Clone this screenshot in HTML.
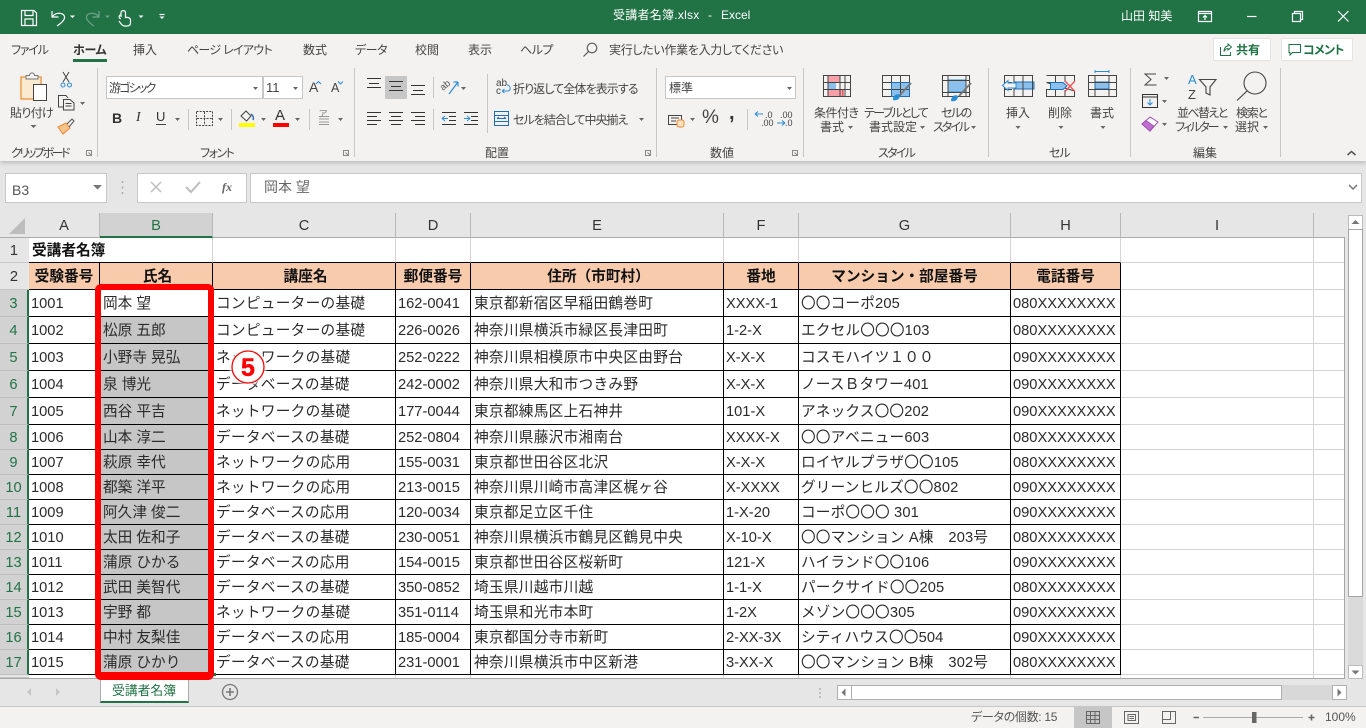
<!DOCTYPE html>
<html lang="ja"><head><meta charset="utf-8"><title>受講者名簿.xlsx - Excel</title>
<style>
*{box-sizing:border-box}
html,body{margin:0;padding:0}
body{width:1366px;height:728px;overflow:hidden;position:relative;background:#e6e6e6;font-family:"Liberation Sans","Noto Sans CJK JP",sans-serif;color:#444}
.a{position:absolute}
.t{position:absolute;white-space:nowrap;line-height:16px;font-size:12px;font-feature-settings:"palt";color:#444}
.w{color:#fff}
#tb{left:0;top:0;width:1366px;height:34px;background:#217346}
#rb{left:0;top:34px;width:1366px;height:127px;background:#f3f2f1;box-shadow:0 2px 4px rgba(0,0,0,.18)}
.sep{position:absolute;width:1px;background:#c6c6c6}
.box{position:absolute;background:#fff;border:1px solid #c6c6c6}
.btn{position:absolute;background:#fff;border:1px solid #e4e4e4;border-radius:2px}
.ch{position:absolute;top:213px;height:25px;background:#e6e6e6;border-bottom:1px solid #ababab;border-right:1px solid #b8b8b8;text-align:center;font-size:14.67px;line-height:26px;color:#333}
#grid{left:29px;top:238px;width:1315px;height:440px;overflow:hidden;background:#fff}
table{border-collapse:separate;border-spacing:0;table-layout:fixed}
#sh{width:1316px;font-size:14.67px;color:#2b2b2b}
#sh td{padding:2px 0 0 2px;border-right:1px solid #d4d4d4;border-bottom:1px solid #d4d4d4;white-space:nowrap;line-height:20px;overflow:visible;vertical-align:middle}
#sh tr.k td{border-color:#000}
#sh tr.k td.g{border-color:#d4d4d4}
#sh tr.k td:nth-child(2),#sh tr.k td:nth-child(3),#sh tr.k td:nth-child(5){padding-left:3px}
#sh tr.d td:nth-child(3),#sh tr.d td:nth-child(5){letter-spacing:.28px}
#sh tr.d td:nth-child(7){letter-spacing:.15px}
#sh tr.o td{background:#f8cbad;text-align:center;font-weight:700;color:#111;padding-left:0}
#sh tr.o td.g{background:#fff}
#sh tr.d td:nth-child(2){background:#c6c6c6}
#sh tr.d.w1 td:nth-child(2){background:#fff}
.h27 td{height:27px}.h25 td{height:25px}
#sh td.bk{border-bottom-color:#000}
#sh td.nr{border-right:0;font-weight:700;color:#111;padding-left:3px}
.rn{position:absolute;left:0;width:29px;background:#e6e6e6;border-bottom:1px solid #c6c6c6;text-align:center;font-size:14.67px;color:#333;padding-right:1px}
.rn.s{background:#d2d2d2;color:#217346;border-right:2px solid #217346;border-bottom-color:#bdbdbd;padding-right:0}
</style></head><body>

<div class="a" id="tb"></div>
<div class="a" id="rb"></div>

<!-- title bar text -->
<div class="t w" style="left:613px;top:7px;letter-spacing:.25px">受講者名簿.xlsx</div>
<div class="t w" style="left:708px;top:7px">-</div>
<div class="t w" style="left:721px;top:7px">Excel</div>
<div class="t w" style="left:1121px;top:8px;font-size:12px">山田 知美</div>

<!-- tabs -->
<div class="t" style="left:11px;top:42px;letter-spacing:-1.2px">ファイル</div>
<div class="t" style="left:73px;top:42px;font-weight:700;color:#333;letter-spacing:-.3px">ホーム</div>
<div class="t" style="left:133px;top:42px">挿入</div>
<div class="t" style="left:187px;top:42px;letter-spacing:-.7px">ページ レイアウト</div>
<div class="t" style="left:303px;top:42px">数式</div>
<div class="t" style="left:355px;top:42px;letter-spacing:-.5px">データ</div>
<div class="t" style="left:415px;top:42px">校閲</div>
<div class="t" style="left:468px;top:42px">表示</div>
<div class="t" style="left:520px;top:42px;letter-spacing:-.5px">ヘルプ</div>
<div class="t" style="left:609px;top:42px;letter-spacing:-.3px">実行したい作業を入力してください</div>
<div class="a" style="left:73px;top:59px;width:34px;height:3px;background:#217346"></div>

<div class="btn" style="left:1213px;top:38px;width:58px;height:23px"></div>
<div class="btn" style="left:1281px;top:38px;width:72px;height:23px"></div>
<div class="t" style="left:1236px;top:42px;font-weight:700;color:#217346">共有</div>
<div class="t" style="left:1303px;top:42px;font-weight:700;color:#217346;letter-spacing:-.7px">コメント</div>

<!-- ribbon separators -->
<div class="sep" style="left:97px;top:68px;height:89px"></div>
<div class="sep" style="left:354px;top:68px;height:89px"></div>
<div class="sep" style="left:656px;top:68px;height:89px"></div>
<div class="sep" style="left:803px;top:68px;height:89px"></div>
<div class="sep" style="left:988px;top:68px;height:89px"></div>
<div class="sep" style="left:1130px;top:68px;height:89px"></div>
<div class="sep" style="left:1280px;top:68px;height:89px"></div>
<div class="sep" style="left:188px;top:109px;height:21px"></div>
<div class="sep" style="left:231px;top:109px;height:21px"></div>
<div class="sep" style="left:309px;top:109px;height:21px"></div>
<div class="sep" style="left:433px;top:77px;height:21px"></div>
<div class="sep" style="left:433px;top:109px;height:21px"></div>
<div class="sep" style="left:487px;top:74px;height:59px"></div>
<div class="sep" style="left:747px;top:109px;height:21px"></div>

<!-- group labels -->
<div class="t" style="left:11px;top:145px;letter-spacing:-2.4px">クリップボード</div>
<div class="t" style="left:200px;top:145px;letter-spacing:-1.5px">フォント</div>
<div class="t" style="left:485px;top:145px">配置</div>
<div class="t" style="left:710px;top:145px">数値</div>
<div class="t" style="left:878px;top:145px;letter-spacing:-1.7px">スタイル</div>
<div class="t" style="left:1049px;top:145px;letter-spacing:-1px">セル</div>
<div class="t" style="left:1193px;top:145px">編集</div>

<!-- clipboard -->
<div class="t" style="left:10px;top:105px;letter-spacing:-.7px">貼り付け</div>

<!-- font -->
<div class="box" style="left:106px;top:76px;width:157px;height:23px"></div>
<div class="box" style="left:263px;top:76px;width:40px;height:23px"></div>
<div class="t" style="left:109px;top:80px;letter-spacing:-1.8px">游ゴシック</div>
<div class="t" style="left:266px;top:80px;font-size:13px">11</div>
<div class="t" style="left:309px;top:79px;font-size:14px">A</div>
<div class="t" style="left:331px;top:80px;font-size:12.5px">A</div>
<div class="t" style="left:112px;top:110px;font-size:14px;font-weight:700;color:#333">B</div>
<div class="t" style="left:136px;top:110px;font-size:14px;font-style:italic;font-family:'Liberation Serif',serif;color:#333">I</div>
<div class="t" style="left:156px;top:109px;font-size:13px;color:#333">U</div>
<div class="t" style="left:275px;top:108px;font-size:15px;color:#333">A</div>
<div class="t" style="left:319px;top:106px;font-size:9px;color:#777">ア</div>

<!-- align / wrap -->
<div class="a" style="left:385px;top:76px;width:22px;height:23px;background:#c6c6c6"></div>
<div class="t" style="left:513px;top:81px;letter-spacing:-.9px">折り返して全体を表示する</div>
<div class="t" style="left:513px;top:112px;letter-spacing:-1px">セルを結合して中央揃え</div>

<!-- number -->
<div class="box" style="left:665px;top:76px;width:131px;height:23px"></div>
<div class="t" style="left:669px;top:80px">標準</div>
<div class="t" style="left:702px;top:110px;font-size:19px;color:#444">%</div>
<div class="t" style="left:729px;top:105px;font-size:20px;font-weight:700;color:#333">,</div>
<div class="t" style="left:765px;top:107px;font-size:9px;color:#444">.0</div>
<div class="t" style="left:761px;top:115px;font-size:9px;color:#444">.00</div>
<div class="t" style="left:780px;top:107px;font-size:9px;color:#444">.00</div>
<div class="t" style="left:785px;top:115px;font-size:9px;color:#444">.0</div>

<!-- styles -->
<div class="t" style="left:814px;top:105px;letter-spacing:-.5px">条件付き</div>
<div class="t" style="left:820px;top:119px">書式</div>
<div class="t" style="left:864px;top:105px;letter-spacing:-1.7px">テーブルとして</div>
<div class="t" style="left:869px;top:119px">書式設定</div>
<div class="t" style="left:941px;top:105px;letter-spacing:-1.5px">セルの</div>
<div class="t" style="left:933px;top:119px;letter-spacing:-2px">スタイル</div>

<!-- cells -->
<div class="t" style="left:1006px;top:105px">挿入</div>
<div class="t" style="left:1048px;top:105px">削除</div>
<div class="t" style="left:1090px;top:105px">書式</div>

<!-- edit -->
<div class="t" style="left:1177px;top:105px;letter-spacing:-1.6px">並べ替えと</div>
<div class="t" style="left:1175px;top:119px;letter-spacing:-2px">フィルター</div>
<div class="t" style="left:1236px;top:105px;letter-spacing:-1.3px">検索と</div>
<div class="t" style="left:1235px;top:119px">選択</div>
<div class="t" style="left:1188px;top:72px;font-size:13px;color:#2a8dd4">A</div>
<div class="t" style="left:1188px;top:87px;font-size:13px;color:#444">Z</div>

<!-- formula bar -->
<div class="box" style="left:5px;top:173px;width:102px;height:30px"></div>
<div class="t" style="left:12px;top:182px;font-size:14px;color:#555">B3</div>
<div class="box" style="left:137px;top:173px;width:110px;height:30px"></div>
<div class="t" style="left:222px;top:179px;font-size:12px;font-style:italic;font-weight:700;font-family:'Liberation Serif',serif;color:#666">fx</div>
<div class="box" style="left:250px;top:173px;width:1112px;height:30px"></div>
<div class="t" style="left:264px;top:179px;font-size:14px;color:#666">岡本 望</div>

<!-- column headers -->
<div class="a" style="left:0;top:213px;width:1345px;height:25px;background:#e6e6e6;border-bottom:1px solid #ababab"></div>
<div class="ch" style="left:29px;width:71px">A</div>
<div class="ch" style="left:100px;width:113px;background:#d2d2d2;border-bottom:2px solid #217346;color:#217346">B</div>
<div class="ch" style="left:213px;width:183px">C</div>
<div class="ch" style="left:396px;width:75px">D</div>
<div class="ch" style="left:471px;width:253px">E</div>
<div class="ch" style="left:724px;width:75px">F</div>
<div class="ch" style="left:799px;width:212px">G</div>
<div class="ch" style="left:1011px;width:110px">H</div>
<div class="ch" style="left:1121px;width:193px">I</div>

<!-- row headers -->
<div class="rn" style="top:238px;height:25px;line-height:26px">1</div>
<div class="rn" style="top:263px;height:27px;line-height:28px">2</div>
<div class="rn s" style="top:290px;height:27px;line-height:28px">3</div>
<div class="rn s" style="top:317px;height:27px;line-height:28px">4</div>
<div class="rn s" style="top:344px;height:27px;line-height:28px">5</div>
<div class="rn s" style="top:371px;height:27px;line-height:28px">6</div>
<div class="rn s" style="top:398px;height:27px;line-height:28px">7</div>
<div class="rn s" style="top:425px;height:25px;line-height:26px">8</div>
<div class="rn s" style="top:450px;height:25px;line-height:26px">9</div>
<div class="rn s" style="top:475px;height:25px;line-height:26px">10</div>
<div class="rn s" style="top:500px;height:25px;line-height:26px">11</div>
<div class="rn s" style="top:525px;height:25px;line-height:26px">12</div>
<div class="rn s" style="top:550px;height:25px;line-height:26px">13</div>
<div class="rn s" style="top:575px;height:25px;line-height:26px">14</div>
<div class="rn s" style="top:600px;height:25px;line-height:26px">15</div>
<div class="rn s" style="top:625px;height:25px;line-height:26px">16</div>
<div class="rn s" style="top:650px;height:25px;line-height:26px">17</div>
<div class="rn" style="top:675px;height:3px"></div>

<!-- grid -->
<div class="a" id="grid">
<table id="sh">
<colgroup><col style="width:71px"><col style="width:113px"><col style="width:183px"><col style="width:75px"><col style="width:253px"><col style="width:75px"><col style="width:212px"><col style="width:110px"><col style="width:193px"><col style="width:31px"></colgroup>
<tbody>
<tr class="h25"><td class="nr bk">受講者名簿</td><td class="bk"></td><td class="bk"></td><td class="bk"></td><td class="bk"></td><td class="bk"></td><td class="bk"></td><td class="bk"></td><td></td><td></td></tr>
<tr class="h27 k o"><td>受験番号</td><td>氏名</td><td>講座名</td><td>郵便番号</td><td>住所（市町村）</td><td>番地</td><td>マンション・部屋番号</td><td>電話番号</td><td class="g"></td><td class="g"></td></tr>
<tr class="h27 k d w1"><td>1001</td><td>岡本 望</td><td>コンピューターの基礎</td><td>162-0041</td><td>東京都新宿区早稲田鶴巻町</td><td>XXXX-1</td><td>〇〇コーポ205</td><td>080XXXXXXXX</td><td class="g"></td><td class="g"></td></tr>
<tr class="h27 k d"><td>1002</td><td>松原 五郎</td><td>コンピューターの基礎</td><td>226-0026</td><td>神奈川県横浜市緑区長津田町</td><td>1-2-X</td><td>エクセル〇〇〇103</td><td>080XXXXXXXX</td><td class="g"></td><td class="g"></td></tr>
<tr class="h27 k d"><td>1003</td><td>小野寺 晃弘</td><td>ネットワークの基礎</td><td>252-0222</td><td>神奈川県相模原市中央区由野台</td><td>X-X-X</td><td>コスモハイツ１００</td><td>090XXXXXXXX</td><td class="g"></td><td class="g"></td></tr>
<tr class="h27 k d"><td>1004</td><td>泉 博光</td><td>データベースの基礎</td><td>242-0002</td><td>神奈川県大和市つきみ野</td><td>X-X-X</td><td>ノースＢタワー401</td><td>090XXXXXXXX</td><td class="g"></td><td class="g"></td></tr>
<tr class="h27 k d"><td>1005</td><td>西谷 平吉</td><td>ネットワークの基礎</td><td>177-0044</td><td>東京都練馬区上石神井</td><td>101-X</td><td>アネックス〇〇202</td><td>090XXXXXXXX</td><td class="g"></td><td class="g"></td></tr>
<tr class="h25 k d"><td>1006</td><td>山本 淳二</td><td>データベースの基礎</td><td>252-0804</td><td>神奈川県藤沢市湘南台</td><td>XXXX-X</td><td>〇〇アベニュー603</td><td>080XXXXXXXX</td><td class="g"></td><td class="g"></td></tr>
<tr class="h25 k d"><td>1007</td><td>萩原 幸代</td><td>ネットワークの応用</td><td>155-0031</td><td>東京都世田谷区北沢</td><td>X-X-X</td><td>ロイヤルプラザ〇〇105</td><td>080XXXXXXXX</td><td class="g"></td><td class="g"></td></tr>
<tr class="h25 k d"><td>1008</td><td>都築 洋平</td><td>ネットワークの応用</td><td>213-0015</td><td>神奈川県川崎市高津区梶ヶ谷</td><td>X-XXXX</td><td>グリーンヒルズ〇〇802</td><td>090XXXXXXXX</td><td class="g"></td><td class="g"></td></tr>
<tr class="h25 k d"><td>1009</td><td>阿久津 俊二</td><td>データベースの応用</td><td>120-0034</td><td>東京都足立区千住</td><td>1-X-20</td><td>コーポ〇〇〇 301</td><td>090XXXXXXXX</td><td class="g"></td><td class="g"></td></tr>
<tr class="h25 k d"><td>1010</td><td>太田 佐和子</td><td>データベースの基礎</td><td>230-0051</td><td>神奈川県横浜市鶴見区鶴見中央</td><td>X-10-X</td><td>〇〇マンション A棟　203号</td><td>080XXXXXXXX</td><td class="g"></td><td class="g"></td></tr>
<tr class="h25 k d"><td>1011</td><td>蒲原 ひかる</td><td>データベースの応用</td><td>154-0015</td><td>東京都世田谷区桜新町</td><td>121-X</td><td>ハイランド〇〇106</td><td>090XXXXXXXX</td><td class="g"></td><td class="g"></td></tr>
<tr class="h25 k d"><td>1012</td><td>武田 美智代</td><td>データベースの基礎</td><td>350-0852</td><td>埼玉県川越市川越</td><td>1-1-X</td><td>パークサイド〇〇205</td><td>080XXXXXXXX</td><td class="g"></td><td class="g"></td></tr>
<tr class="h25 k d"><td>1013</td><td>宇野 都</td><td>ネットワークの基礎</td><td>351-0114</td><td>埼玉県和光市本町</td><td>1-2X</td><td>メゾン〇〇〇305</td><td>090XXXXXXXX</td><td class="g"></td><td class="g"></td></tr>
<tr class="h25 k d"><td>1014</td><td>中村 友梨佳</td><td>データベースの応用</td><td>185-0004</td><td>東京都国分寺市新町</td><td>2-XX-3X</td><td>シティハウス〇〇504</td><td>090XXXXXXXX</td><td class="g"></td><td class="g"></td></tr>
<tr class="h25 k d"><td>1015</td><td>蒲原 ひかり</td><td>データベースの基礎</td><td>231-0001</td><td>神奈川県横浜市中区新港</td><td>3-XX-X</td><td>〇〇マンション B棟　302号</td><td>080XXXXXXXX</td><td class="g"></td><td class="g"></td></tr>
<tr class="h25"><td></td><td></td><td></td><td></td><td></td><td></td><td></td><td></td><td></td><td></td></tr>
</tbody></table>
</div>
<div class="a" style="left:1344px;top:237px;width:1px;height:442px;background:#a6a6a6"></div>
<div class="a" style="left:0;top:678px;width:1345px;height:1px;background:#a6a6a6"></div>

<!-- vertical scrollbar -->
<div class="a" style="left:1348px;top:229px;width:15px;height:436px;background:#dadada"></div>
<div class="a" style="left:1348px;top:215px;width:15px;height:15px;background:#fff;border:1px solid #bbb"></div>
<div class="a" style="left:1348px;top:229px;width:15px;height:368px;background:#fff;border:1px solid #a6a6a6"></div>
<div class="a" style="left:1348px;top:665px;width:15px;height:14px;background:#fff;border:1px solid #bbb"></div>

<!-- sheet tabs -->
<div class="a" style="left:100px;top:678px;width:89px;height:25px;background:#fff;border-left:1px solid #ababab;border-right:1px solid #ababab;border-bottom:2px solid #217346"></div>
<div class="t" style="left:112px;top:683px;font-size:12.8px;color:#217346;font-feature-settings:normal">受講者名簿</div>

<!-- horizontal scrollbar -->
<div class="a" style="left:851px;top:685px;width:481px;height:15px;background:#d8d8d8"></div>
<div class="a" style="left:837px;top:685px;width:15px;height:15px;background:#fff;border:1px solid #b0b0b0"></div>
<div class="a" style="left:851px;top:685px;width:431px;height:15px;background:#fff;border:1px solid #b0b0b0"></div>
<div class="a" style="left:1332px;top:685px;width:15px;height:15px;background:#fff;border:1px solid #b0b0b0"></div>

<!-- status bar -->
<div class="a" style="left:0;top:706px;width:1366px;height:22px;background:#f3f2f1;border-top:1px solid #c6c6c6"></div>
<div class="a" style="left:1074px;top:707px;width:38px;height:21px;background:#c6c6c6"></div>
<div class="t" style="left:971px;top:709px;font-size:12px;color:#555;letter-spacing:-.3px">データの個数: 15</div>
<div class="t" style="left:1325px;top:709px;font-size:12px;color:#555">100%</div>

<!-- selection frame -->
<div class="a" style="left:213px;top:673px;width:3px;height:3px;background:#217346"></div>
<div class="a" style="left:95px;top:284px;width:119px;height:396px;border:6px solid #f00;border-bottom-width:8px;border-radius:6px"></div>

<!-- icons -->
<svg class="a" style="left:0;top:0" width="1366" height="728" viewBox="0 0 1366 728" fill="none">
<!-- titlebar -->
<g stroke="#fff" stroke-width="1.2">
<path d="M21.5 10.5H34L36.5 13V25.5H21.5ZM25 10.5V15.5H33V10.5M25 25.5V19H33V25.5"/>
<path d="M52 11V17H58.5M52.5 16.5C56 12 65 12 64.5 18C64 21 60 24 57 26"/>
<path d="M121 17V12.5C121 10 125.500 10 125.500 12.500V17.500C128 17 130.500 18 130.500 20V23C130.500 25 129 26 127 26H124.500C122 26 120.500 23 119 21M121 15C118.500 14.500 118.500 19 121 18.500"/>
<path d="M1198.500 11.500H1211.500V21.500H1198.500ZM1198.500 13.500H1211.500M1205 20V15.500M1203 17.500L1205 15.500L1207 17.500"/>
<path d="M1247 16.500H1256.500"/>
<path d="M1292.500 13.500H1300.500V21.500H1292.500ZM1294.500 13.500V11.500H1302.500V19.500H1300.500"/>
<path d="M1338 11L1348.500 21.500M1348.500 11L1338 21.500"/>
<path d="M159.500 14.500H164.500"/>
</g>
<path d="M99 11V17H92.500M98.500 16.500C95 12 86 12 86.500 18C87 21 91 24 94 26" stroke="#6fa287" stroke-width="1.200"/>
<g fill="#fff"><path d="M70 15.500h5l-2.500 2.500zM138.500 15.500h5l-2.500 2.500zM159.500 16.500h5l-2.500 2.500z"/></g>
<path d="M105 15.500h5l-2.500 2.500z" fill="#6fa287"/>
<!-- tell me search -->
<circle cx="592" cy="48" r="4.800" stroke="#555" stroke-width="1.100"/><path d="M588.500 51.500L583.500 56.500" stroke="#555" stroke-width="1.200"/>
<!-- share/comment -->
<path d="M1220.500 47V55.500H1230.500V52M1224 51.500C1224 48 1226 46 1228 46V44L1231.500 47L1228 50V48.500C1226.500 48.500 1225 49.500 1224 51.500Z" stroke="#217346" stroke-width="1"/>
<path d="M1289 44.500H1300.500V52.500H1292.500L1290 55V52.500H1289Z" stroke="#217346" stroke-width="1"/>
<!-- paste -->
<rect x="21" y="77" width="20" height="22" fill="#fbe9d0" stroke="#eba04a" stroke-width="1.500"/>
<path d="M26 79V75.500H29.500C30 72 34 72 34.500 75.500H38V79Z" fill="#f3f2f1" stroke="#777"/>
<rect x="33.500" y="84.500" width="13" height="16" fill="#fff" stroke="#444"/>
<!-- scissors -->
<path d="M63 72L69 82M69 72L63 82" stroke="#444"/><circle cx="63" cy="85" r="2" stroke="#2a8dd4"/><circle cx="69.500" cy="85" r="2" stroke="#2a8dd4"/>
<!-- copy -->
<path d="M63 107H58.500V95.500H66L68 98M63.500 99.500H70L74 103V110H63.500ZM65.500 103.500H71.500M65.500 106H71.500" stroke="#444"/>
<!-- painter -->
<path d="M58 127L66 123L70 128L63 134Z" fill="#f6c48b" stroke="#eb8a2f"/><path d="M67 124L72 119L74 121L69 127" stroke="#555"/>
<!-- arrows -->
<g fill="#666">
<path d="M30.500 125h6l-3 3zM80 102h5l-2.500 3zM253 87h5l-2.500 3zM293 87h5l-2.500 3zM175 118h5l-2.500 3zM218 118h5l-2.500 3zM261 118h5l-2.500 3zM295 118h5l-2.500 3zM338 118h5l-2.500 3zM461 87h5l-2.500 3zM639 118h5l-2.500 3zM787 87h5l-2.500 3zM690 118h5l-2.500 3zM848 126h5l-2.500 3zM920 126h5l-2.500 3zM971 126h5l-2.500 3zM1015.500 126h5l-2.500 3zM1058.500 126h5l-2.500 3zM1100.500 126h5l-2.500 3zM1164 77h5l-2.500 3zM1162 100h5l-2.500 3zM1162 123h5l-2.500 3zM1223 126h5l-2.500 3zM1263 126h5l-2.500 3z"/>
</g>
<path d="M316 84l2.500-2.500 2.500 2.500M338 81.500l2.500 2.500 2.500-2.500" stroke="#2a8dd4"/>
<!-- underline, border, fill, colour -->
<path d="M156 124.500H166" stroke="#444"/>
<path d="M196.500 111.500H212.500V125.500H196.500ZM204.500 112V125M197 118.500H212" stroke="#444" stroke-dasharray="2 1.200"/>
<path d="M241 116L246 111L251 116L246.500 121Z" stroke="#444"/><path d="M251 114C253 115 254 118 253 120" stroke="#2a6fb0" stroke-width="1.500"/>
<rect x="239" y="123" width="16" height="4" fill="#ff0"/>
<rect x="273" y="123" width="16" height="4" fill="#f00"/>
<path d="M319 116.500H329M319 119H329M319 122H329M319 124.500H329" stroke="#999"/>
<!-- alignment -->
<g stroke="#333" stroke-width="1">
<path d="M367 78.500H381M369 83.500H379M367 87.500H381"/>
<path d="M389 81.500H403M391 86.500H401M389 90.500H403"/>
<path d="M411 85.500H425M413 90.500H423M411 94.500H425"/>
<path d="M367 112.500H381M367 116.500H377M367 120.500H381M367 124.500H377"/>
<path d="M389 112.500H403M391 116.500H401M389 120.500H403M391 124.500H401"/>
<path d="M411 112.500H425M415 116.500H425M411 120.500H425M415 124.500H425"/>
<path d="M442 112.500H456M449 116.500H456M449 120.500H456M442 124.500H456"/>
<path d="M464 112.500H478M471 116.500H478M471 120.500H478M464 124.500H478"/>
</g>
<text x="443" y="91" transform="rotate(-40 443 91)" font-family="Liberation Sans" font-size="9.500" fill="#555">ab</text>
<path d="M442 118.500H448M442 118.500L445 116M442 118.500L445 121" stroke="#2a8dd4"/>
<path d="M464 118.500H470M470 118.500L467 116M470 118.500L467 121" stroke="#2a8dd4"/>
<path d="M449 94L458 82M458 82H453.500M458 82V86.500" stroke="#2a8dd4" stroke-width="1.200"/>
<!-- wrap / merge -->
<text x="496" y="86" font-family="Liberation Sans" font-size="10" fill="#444">ab</text>
<text x="496" y="94" font-family="Liberation Sans" font-size="10" fill="#444">c</text>
<path d="M502 91H508C511 91 511 85 507 85M502 91L504.500 89M502 91L504.500 93" stroke="#2a8dd4"/>
<rect x="494.500" y="111.500" width="14" height="14" stroke="#1e6eb5"/><path d="M495 115.500H508M495 121.500H508M497 118.500H506M497 118.500L499 117M506 118.500L504 117" stroke="#1e6eb5"/>
<!-- number format -->
<rect x="668.500" y="115.500" width="13" height="9" stroke="#444"/><path d="M671 118H679M671 121H676" stroke="#444"/>
<rect x="677" y="120" width="7" height="7" rx="2" fill="#fbe0c0" stroke="#eb8a2f"/>
<path d="M755 114H763M755 114L758 111.500M755 114L758 116.500M777 123H785M785 123L782 120.500M785 123L782 125.500" stroke="#2a8dd4" stroke-width="1.100"/>
<!-- cond format -->
<rect x="828" y="75.500" width="12" height="7" fill="#f8a0a8" stroke="#d22"/>
<rect x="828" y="82.500" width="8" height="7" fill="#8cc0ec"/>
<rect x="828" y="89.500" width="15" height="7" fill="#f8a0a8" stroke="#d22"/>
<path d="M823.500 75.500H850.500V96.500H823.500ZM828 75.500V96.500M840 75.500V96.500M845 75.500V96.500M823.500 82.500H850.500M823.500 89.500H850.500" stroke="#444"/>
<!-- table -->
<rect x="891" y="82" width="19" height="14" fill="#8cc0ec"/>
<path d="M882.500 75.500H909.500V96.500H882.500ZM891.500 75.500V96.500M900.500 75.500V96.500M882.500 82.500H909.500M882.500 89.500H909.500" stroke="#444"/>
<path d="M891.500 82.500H909.500V96.500H891.500Z" stroke="#1e6eb5"/>
<path d="M911 83L899 96" stroke="#777" stroke-width="2"/><path d="M893 100C893 95 897 93 900 95C900 99 897 101 893 100Z" fill="#2a8dd4"/>
<!-- cell style -->
<rect x="948" y="80" width="18" height="12" fill="#8cc0ec" stroke="#2a8dd4"/>
<path d="M942.500 75.500H969.500V96.500H942.500ZM948 75.500V96.500M966 75.500V96.500M942.500 80.500H969.500M942.500 92.500H969.500" stroke="#444"/>
<path d="M971 83L959 96" stroke="#777" stroke-width="2"/><path d="M951 101C951 96 955 94 958 96C958 100 955 102 951 101Z" fill="#2a8dd4"/>
<!-- insert -->
<rect x="1014" y="82" width="20" height="7" fill="#8cc0ec" stroke="#1e6eb5"/>
<path d="M1004.500 75.500H1032.500V96.500H1004.500ZM1014 75.500V96.500M1023 75.500V96.500M1004.500 82.500H1012M1004.500 89.500H1012" stroke="#444"/>
<path d="M1002.500 85.500L1008 80.500V83H1016V88H1008V90.500Z" fill="#f3f2f1" stroke="#2a8dd4"/>
<!-- delete -->
<path d="M1046.500 75.500H1074.500V81M1074.500 91V96.500H1046.500V89.500H1050.500V82.500H1046.500Z" stroke="#444"/>
<path d="M1055.500 75.500V82M1065 75.500V82M1055.500 90V96.500M1065 90V96.500" stroke="#444"/>
<path d="M1050.500 82.500H1063L1067 86L1063 89.500H1050.500Z" fill="#8cc0ec" stroke="#1e6eb5"/>
<path d="M1065 81L1075 91.500M1075 81L1065 91.500" stroke="#f25050" stroke-width="1.300"/>
<!-- format -->
<path d="M1095 71.500H1109M1095 70V73M1109 70V73" stroke="#2a8dd4"/>
<rect x="1095" y="82" width="14" height="7" fill="#8cc0ec" stroke="#1e6eb5"/>
<path d="M1088.500 75.500H1116.500V96.500H1088.500ZM1095 75.500V82M1109 75.500V82M1095 89.500V96.500M1109 89.500V96.500M1088.500 82.500H1116.500M1088.500 89.500H1116.500" stroke="#444"/>
<!-- edit -->
<path d="M1156 74H1145L1151 79.500L1145 85H1156.500" stroke="#444"/>
<rect x="1142.500" y="94.500" width="15" height="13" stroke="#333"/><path d="M1143 97H1157" stroke="#333"/>
<path d="M1150 99V105M1147.500 102.500L1150 105L1152.500 102.500" stroke="#2a8dd4"/>
<path d="M1142 124L1150 117L1158 122L1150 131Z" fill="#fff" stroke="#a050b0"/><path d="M1142 124L1146 120.500L1153.500 126L1150 131Z" fill="#c070d0" stroke="#a050b0"/>
<path d="M1199.500 79.500H1216L1210 87V95L1206 93V87Z" stroke="#444" stroke-width="1.100"/>
<circle cx="1255" cy="83" r="11" stroke="#444" stroke-width="1.100"/><path d="M1247 91L1237 100.500" stroke="#444" stroke-width="1.200"/>
<path d="M1347.500 155L1351.500 151.500L1355.500 155" stroke="#555" stroke-width="1.500"/>
<!-- launchers -->
<g stroke="#888"><path d="M86.500 150.500H91.500V155.500H86.500ZM88.500 152.500L91 155"/>
<path d="M343.500 150.500H348.500V155.500H343.500ZM345.500 152.500L348 155"/>
<path d="M645.500 150.500H650.500V155.500H645.500ZM647.500 152.500L650 155"/>
<path d="M792.500 150.500H797.500V155.500H792.500ZM794.500 152.500L797 155"/></g>
<!-- formula bar glyphs -->
<path d="M102 185h-9l4.500 4.500z" fill="#777"/>
<path d="M122.500 181v2M122.500 186.500v2M122.500 192v2" stroke="#aaa" stroke-width="1.500"/>
<path d="M151 182L161 192M161 182L151 192" stroke="#bdbdbd" stroke-width="1.500"/>
<path d="M186 187L191 192L200 182" stroke="#bdbdbd" stroke-width="2"/>
<path d="M1349 185L1353 189L1357 185" stroke="#777" stroke-width="1.500"/>
<!-- corner -->
<path d="M25 218V234H9Z" fill="#bdbdbd"/>
<!-- scrollbar arrows -->
<path d="M1351.500 224l4-4 4 4zM1351.500 670.500l4 4 4-4z" fill="#777"/>
<path d="M845.500 688.500l-4 4 4 4zM1337.500 688.500l4 4-4 4z" fill="#777"/>
<path d="M31 688l-4 4 4 4zM56 688l4 4-4 4z" fill="#c6c6c6"/>
<path d="M820 688v2M820 692v2M820 696v2" stroke="#b0b0b0" stroke-width="1.500"/>
<circle cx="230" cy="692" r="7.500" stroke="#777" stroke-width="1.300"/><path d="M226 692H234M230 688V696" stroke="#777" stroke-width="1.600"/>
<!-- status icons -->
<path d="M1086.500 711.500H1099.500V723.500H1086.500ZM1090.500 712V723M1095 712V723M1087 715.500H1099M1087 719.500H1099" stroke="#666"/>
<path d="M1124.500 711.500H1138.500V723.500H1124.500ZM1128 714.500H1135.500V720.500H1128ZM1129.500 716.500H1134M1129.500 718.500H1134" stroke="#666"/>
<path d="M1162.500 711.500H1175.500V723.500H1162.500ZM1162.500 719.500H1170.500V711.500" stroke="#666"/>
<path d="M1203 717.500H1303" stroke="#aaa"/>
<rect x="1252" y="712" width="4.500" height="11" fill="#666"/>
<path d="M1193.500 717.500H1199M1308.500 717.500H1314.500M1311.500 714.500V720.500" stroke="#666" stroke-width="1.600"/>
<!-- badge -->
<defs><filter id="gl" x="-30%" y="-30%" width="160%" height="160%"><feGaussianBlur stdDeviation="1.500"/></filter></defs>
<circle cx="248" cy="367" r="18" fill="#fff" filter="url(#gl)"/>
<circle cx="248" cy="367" r="16" stroke="#f00" stroke-width="1.300" fill="#fff"/>
<text x="248" y="376" text-anchor="middle" font-family="Liberation Sans" font-weight="700" font-size="25" stroke="#f00" stroke-width=".5" fill="#f00">5</text>
</svg>
</body></html>
